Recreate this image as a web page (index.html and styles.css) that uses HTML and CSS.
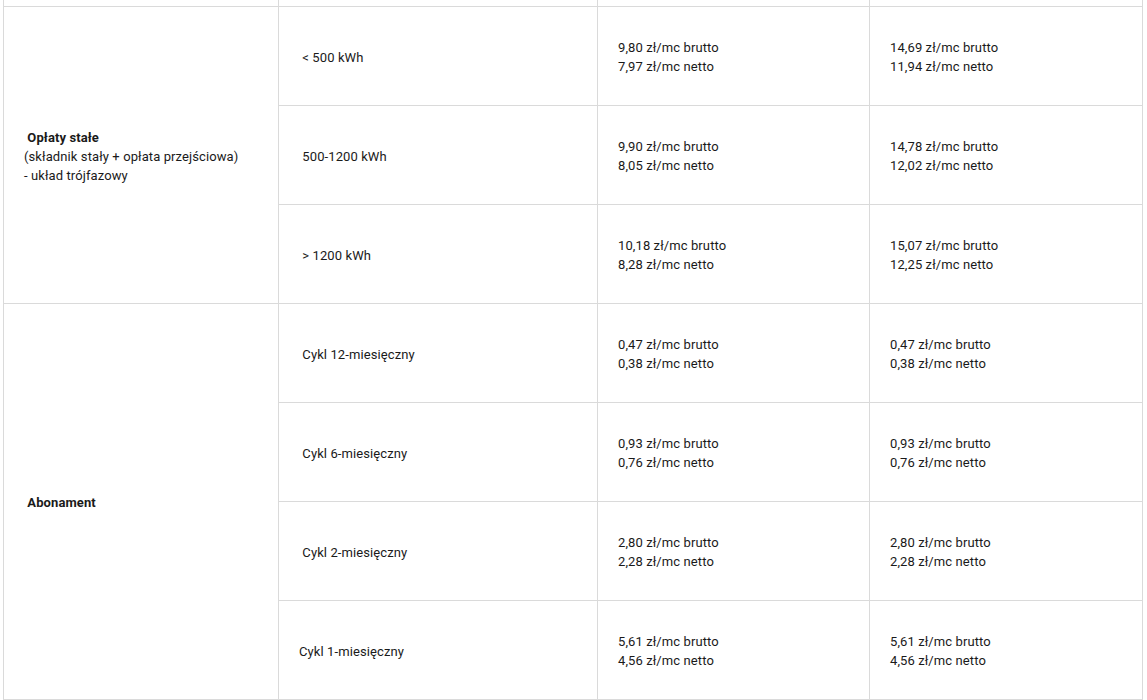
FILE: index.html
```html
<!DOCTYPE html>
<html lang="pl">
<head>
<meta charset="utf-8">
<link rel="stylesheet" href="styles.css">
</head>
<body>
<table class="tariff">
  <colgroup>
    <col class="c1"><col class="c2"><col class="c3"><col class="c4">
  </colgroup>
  <tbody>
    <tr class="stub"><td></td><td></td><td></td><td></td></tr>
    <tr>
      <td rowspan="3" class="label"><strong>&nbsp;Opłaty stałe</strong><br>(składnik stały + opłata przejściowa)<br>- układ trójfazowy</td>
      <td>&nbsp;&lt; 500 kWh</td>
      <td>9,80 zł/mc brutto<br>7,97 zł/mc netto</td>
      <td>14,69 zł/mc brutto<br>11,94 zł/mc netto</td>
    </tr>
    <tr>
      <td>&nbsp;500-1200 kWh</td>
      <td>9,90 zł/mc brutto<br>8,05 zł/mc netto</td>
      <td>14,78 zł/mc brutto<br>12,02 zł/mc netto</td>
    </tr>
    <tr>
      <td>&nbsp;&gt; 1200 kWh</td>
      <td>10,18 zł/mc brutto<br>8,28 zł/mc netto</td>
      <td>15,07 zł/mc brutto<br>12,25 zł/mc netto</td>
    </tr>
    <tr>
      <td rowspan="4" class="label"><strong>&nbsp;Abonament</strong></td>
      <td>&nbsp;Cykl 12-miesięczny</td>
      <td>0,47 zł/mc brutto<br>0,38 zł/mc netto</td>
      <td>0,47 zł/mc brutto<br>0,38 zł/mc netto</td>
    </tr>
    <tr>
      <td>&nbsp;Cykl 6-miesięczny</td>
      <td>0,93 zł/mc brutto<br>0,76 zł/mc netto</td>
      <td>0,93 zł/mc brutto<br>0,76 zł/mc netto</td>
    </tr>
    <tr>
      <td>&nbsp;Cykl 2-miesięczny</td>
      <td>2,80 zł/mc brutto<br>2,28 zł/mc netto</td>
      <td>2,80 zł/mc brutto<br>2,28 zł/mc netto</td>
    </tr>
    <tr>
      <td>Cykl 1-miesięczny</td>
      <td>5,61 zł/mc brutto<br>4,56 zł/mc netto</td>
      <td>5,61 zł/mc brutto<br>4,56 zł/mc netto</td>
    </tr>
  </tbody>
</table>
</body>
</html>
```
FILE: styles.css
```css
html, body {
  margin: 0;
  padding: 0;
  background: #fff;
}
body {
  font-family: Roboto, "Noto Sans", sans-serif;
  font-size: 13px;
  letter-spacing: 0.1px;
  color: #1a1a1a;
}
.tariff {
  margin-left: 3px;
  width: 1139px;
  table-layout: fixed;
  border-collapse: collapse;
  border-spacing: 0;
}
.c1 { width: 275px; }
.c2 { width: 319px; }
.c3 { width: 272px; }
.c4 { width: 273px; }
.tariff td {
  border: 1px solid #dadada;
  padding: 2px 20px 0;
  height: 96px;
  line-height: 19px;
  vertical-align: middle;
}
.tariff .stub td {
  border-top: none;
  height: 6px;
  padding: 0;
}
.label strong {
  font-weight: 700;
}
```
